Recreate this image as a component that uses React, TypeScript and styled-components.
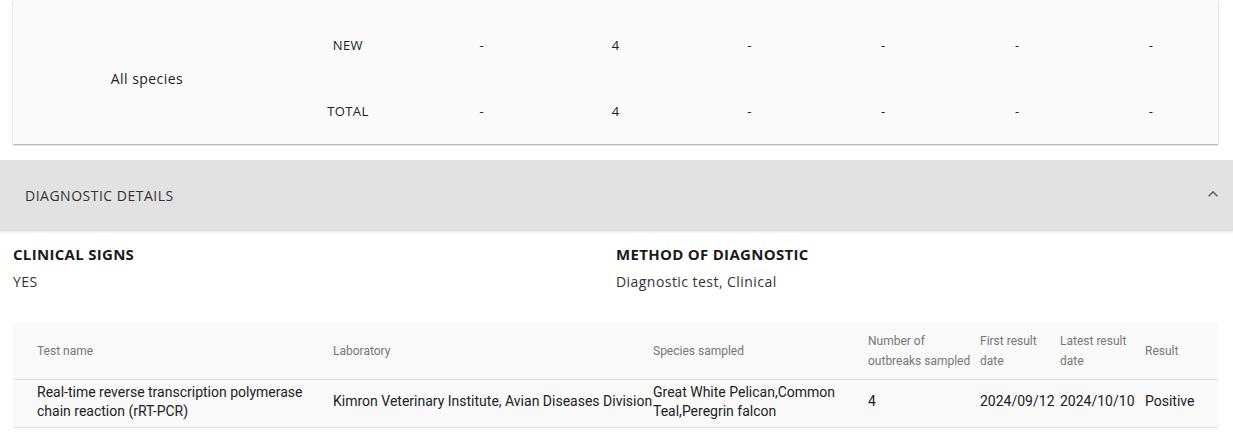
import React from 'react';
import styled, { createGlobalStyle } from 'styled-components';

const SANS = '"Open Sans", "Liberation Sans", sans-serif';
const TABLE_FONT = 'Roboto, "Liberation Sans", sans-serif';

const GlobalStyle = createGlobalStyle`
  html, body {
    margin: 0;
    padding: 0;
    background: #ffffff;
  }
  body {
    font-family: ${SANS};
    color: #222;
  }
  * {
    box-sizing: border-box;
  }
`;

const summaryRows = [
  { label: 'NEW', values: ['-', '4', '-', '-', '-', '-'] },
  { label: 'TOTAL', values: ['-', '4', '-', '-', '-', '-'] },
];

const tests = [
  {
    name: 'Real-time reverse transcription polymerase chain reaction (rRT-PCR)',
    lab: 'Kimron Veterinary Institute, Avian Diseases Division',
    species: 'Great White Pelican,Common Teal,Peregrin falcon',
    outbreaks: '4',
    first: '2024/09/12',
    latest: '2024/10/10',
    result: 'Positive',
  },
];

function App() {
  return (
    <Page>
      <GlobalStyle />
      <SummaryCard>
        <SpeciesCell>All species</SpeciesCell>
        <SummaryRows>
          {summaryRows.map((row) => (
            <SummaryRow key={row.label}>
              <SummaryCell>{row.label}</SummaryCell>
              {row.values.map((v, i) => (
                <SummaryCell key={i}>{v}</SummaryCell>
              ))}
            </SummaryRow>
          ))}
        </SummaryRows>
      </SummaryCard>

      <AccordionHeader>
        <span>DIAGNOSTIC DETAILS</span>
        <Chevron viewBox="0 0 24 24">
          <path d="M7.41 15.41 12 10.83l4.59 4.58L18 14l-6-6-6 6z" />
        </Chevron>
      </AccordionHeader>

      <Details>
        <InfoGrid>
          <InfoBlock>
            <InfoTitle>CLINICAL SIGNS</InfoTitle>
            <InfoValue>YES</InfoValue>
          </InfoBlock>
          <InfoBlock>
            <InfoTitle>METHOD OF DIAGNOSTIC</InfoTitle>
            <InfoValue>Diagnostic test, Clinical</InfoValue>
          </InfoBlock>
        </InfoGrid>

        <TestTable>
          <colgroup>
            <col style={{ width: 320 }} />
            <col style={{ width: 320 }} />
            <col style={{ width: 215 }} />
            <col style={{ width: 112 }} />
            <col style={{ width: 80 }} />
            <col style={{ width: 85 }} />
            <col />
          </colgroup>
          <thead>
            <tr>
              <th>Test name</th>
              <th>Laboratory</th>
              <th>Species sampled</th>
              <th>Number of outbreaks sampled</th>
              <th>First result date</th>
              <th>Latest result date</th>
              <th>Result</th>
            </tr>
          </thead>
          <tbody>
            {tests.map((t) => (
              <tr key={t.name}>
                <td>{t.name}</td>
                <td>{t.lab}</td>
                <td>{t.species}</td>
                <td>{t.outbreaks}</td>
                <td>{t.first}</td>
                <td>{t.latest}</td>
                <td>{t.result}</td>
              </tr>
            ))}
          </tbody>
        </TestTable>
      </Details>
    </Page>
  );
}

export default App;

const Page = styled.div`
  width: 1233px;
  height: 433px;
  overflow: hidden;
`;

const SummaryCard = styled.div`
  display: grid;
  grid-template-columns: 268px 1fr;
  margin: 0 15px 0 13px;
  padding-top: 12px;
  background: #fafafa;
  box-shadow: 0 1px 2px rgba(0, 0, 0, 0.25), 0 1px 1px rgba(0, 0, 0, 0.12);
  font-size: 13px;
  letter-spacing: 0.4px;
  color: #222;
`;

const SpeciesCell = styled.div`
  display: flex;
  align-items: center;
  justify-content: center;
  font-size: 14px;
  letter-spacing: 0.45px;
`;

const SummaryRows = styled.div`
  display: flex;
  flex-direction: column;
`;

const SummaryRow = styled.div`
  display: grid;
  grid-template-columns: repeat(7, 1fr);
  height: 66px;
`;

const SummaryCell = styled.div`
  display: flex;
  align-items: center;
  justify-content: center;
`;

const AccordionHeader = styled.div`
  display: flex;
  align-items: center;
  justify-content: space-between;
  height: 71px;
  margin-top: 16px;
  padding: 0 10px 1px 25px;
  background: #e2e2e2;
  box-shadow: 0 1px 2px rgba(0, 0, 0, 0.12);
  font-size: 14px;
  letter-spacing: 0.5px;
  color: #333;
`;

const Chevron = styled.svg`
  width: 20px;
  height: 20px;
  margin-top: -3px;
  fill: #666;
`;

const Details = styled.div`
  padding: 13px 15px 0 13px;
`;

const InfoGrid = styled.div`
  display: grid;
  grid-template-columns: 603px 1fr;
`;

const InfoBlock = styled.div`
  display: flex;
  flex-direction: column;
`;

const InfoTitle = styled.div`
  font-size: 15px;
  font-weight: 700;
  line-height: 20px;
  letter-spacing: 0.3px;
  color: #1a1a1a;
`;

const InfoValue = styled.div`
  margin-top: 8px;
  font-size: 14px;
  line-height: 20px;
  letter-spacing: 0.45px;
  color: #333;
`;

const TestTable = styled.table`
  width: 100%;
  margin-top: 30px;
  border-collapse: collapse;
  table-layout: fixed;
  background: #f9f9f9;
  font-family: ${TABLE_FONT};

  th {
    height: 57px;
    padding: 2px 4px 0 0;
    text-align: left;
    vertical-align: middle;
    font-size: 12px;
    font-weight: 400;
    line-height: 20px;
    color: #777;
    border-bottom: 1px solid #e0e0e0;
  }

  td {
    height: 48px;
    padding: 0 0 3px;
    text-align: left;
    vertical-align: middle;
    font-size: 14px;
    line-height: 19px;
    color: #222;
    border-bottom: 1px solid #e0e0e0;
  }

  th:first-child,
  td:first-child {
    padding-left: 24px;
  }

  td:first-child {
    padding-right: 16px;
  }
`;
